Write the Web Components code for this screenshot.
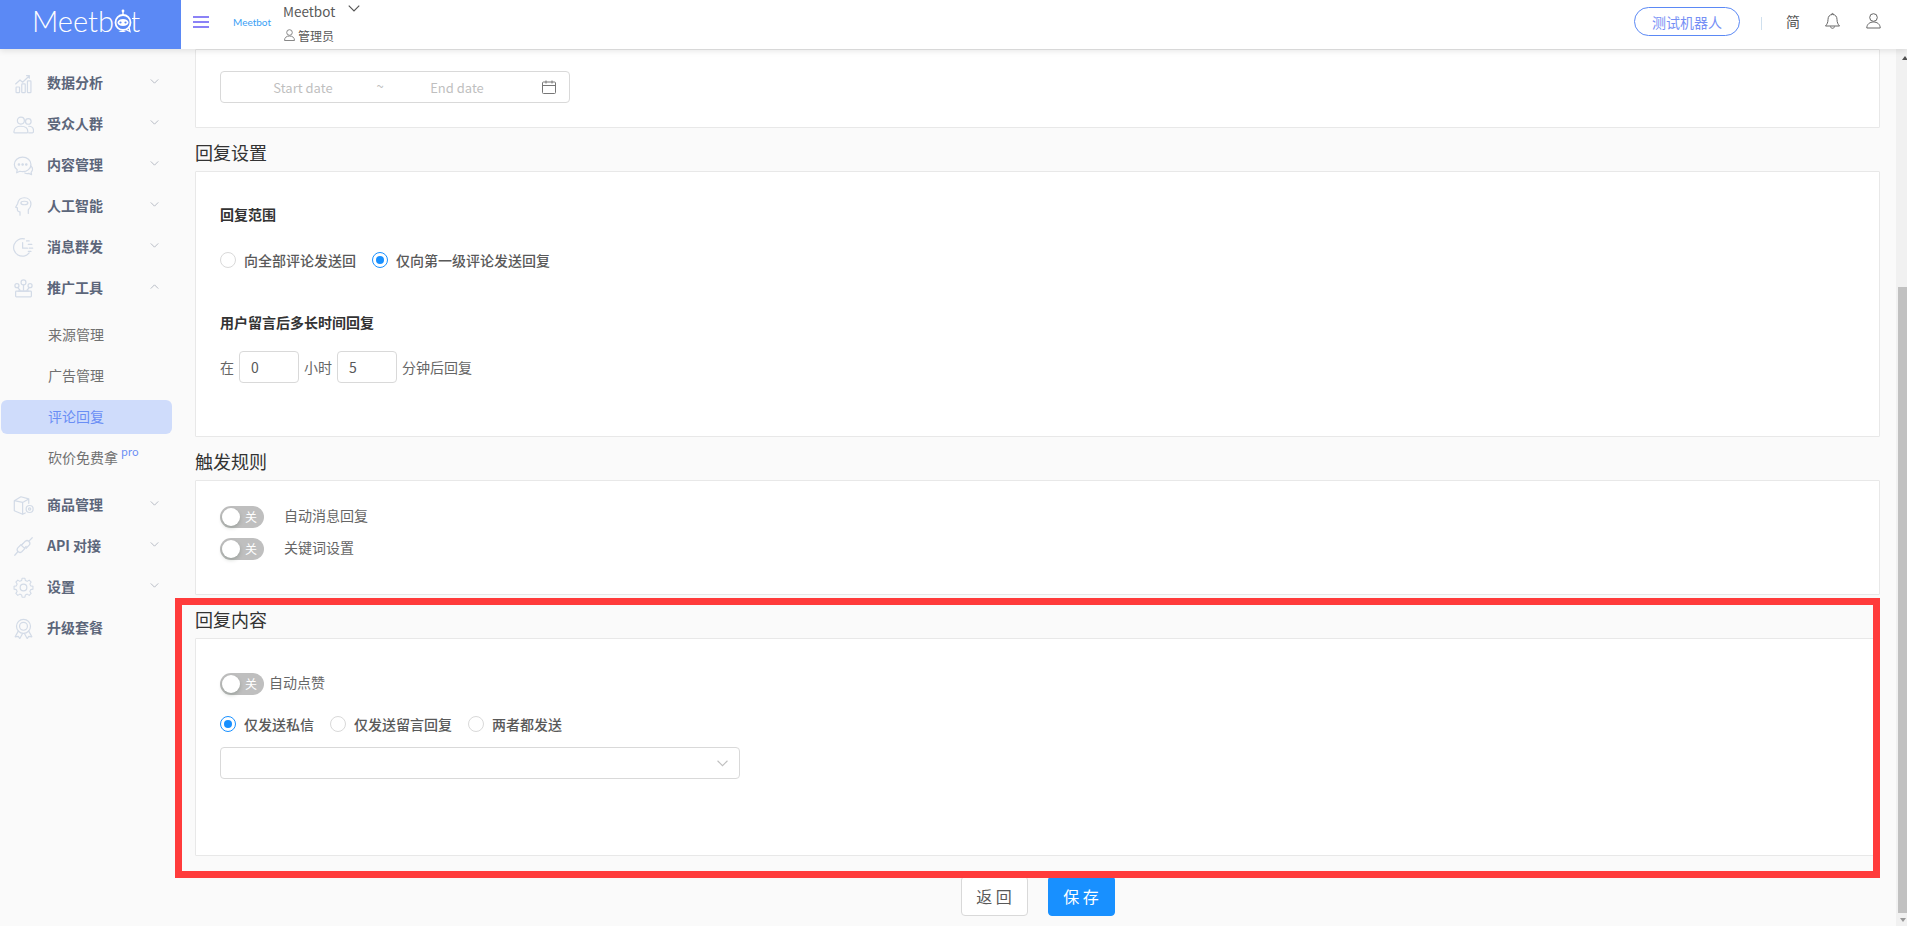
<!DOCTYPE html>
<html lang="zh"><head><meta charset="utf-8"><title>Meetbot</title>
<style>
html,body{margin:0;padding:0;height:926px;overflow:hidden;background:#fafafa;font-family:"Noto Sans CJK SC","Noto Sans",sans-serif;font-size:14px;color:#666}
</style></head><body>
<app-shell>
  <app-header slot="header"></app-header>
  <side-nav slot="nav">
    <nav-item icon="chart" arrow="down">数据分析</nav-item>
    <nav-item icon="users" arrow="down">受众人群</nav-item>
    <nav-item icon="chat" arrow="down">内容管理</nav-item>
    <nav-item icon="head" arrow="down">人工智能</nav-item>
    <nav-item icon="clock" arrow="down">消息群发</nav-item>
    <nav-item icon="tool" arrow="up">推广工具</nav-item>
    <sub-nav>
      <sub-item>来源管理</sub-item>
      <sub-item>广告管理</sub-item>
      <sub-item active>评论回复</sub-item>
      <sub-item pro>砍价免费拿</sub-item>
    </sub-nav>
    <nav-item icon="box" arrow="down">商品管理</nav-item>
    <nav-item icon="plug" arrow="down">API 对接</nav-item>
    <nav-item icon="gear" arrow="down">设置</nav-item>
    <nav-item icon="medal">升级套餐</nav-item>
  </side-nav>
  <form-card style="height:79px;padding-top:21px">
    <date-range></date-range>
  </form-card>

  <section-title>回复设置</section-title>
  <form-card style="height:266px">
    <field-label style="margin-top:32px">回复范围</field-label>
    <radio-row style="margin-top:26px">
      <radio-opt>向全部评论发送回</radio-opt>
      <radio-opt checked>仅向第一级评论发送回复</radio-opt>
    </radio-row>
    <field-label style="margin-top:42px">用户留言后多长时间回复</field-label>
    <delay-row style="margin-top:19px"></delay-row>
  </form-card>

  <section-title>触发规则</section-title>
  <form-card style="height:115px;padding-top:25px">
    <toggle-row gap="20">自动消息回复</toggle-row>
    <toggle-row gap="20" style="margin-top:10px">关键词设置</toggle-row>
  </form-card>

  <section-title>回复内容</section-title>
  <form-card style="height:218px;padding-top:34px">
    <toggle-row gap="5">自动点赞</toggle-row>
    <radio-row strong style="margin-top:19px">
      <radio-opt checked>仅发送私信</radio-opt>
      <radio-opt>仅发送留言回复</radio-opt>
      <radio-opt>两者都发送</radio-opt>
    </radio-row>
    <select-box style="margin-top:13px"></select-box>
  </form-card>

  <action-bar>
    <action-btn>返 回</action-btn>
    <action-btn primary>保 存</action-btn>
  </action-bar>
</app-shell>
<script>
const ICONS={
chart:'<path d="M3 12.500 8 8l3 2.500 7.500-7M15.500 3h3.200v3"/><rect x="3.500" y="16" width="4" height="6.500" rx=".8"/><rect x="10" y="12.500" width="4" height="10" rx=".8"/><rect x="16.500" y="9" width="4" height="13.500" rx=".8"/>',
users:'<circle cx="9" cy="7.500" r="4"/><path d="M1 20.500c0-4.500 3.400-6.500 8-6.500s8 2 8 6.500c0 .6-.4 1-1 1H2c-.6 0-1-.4-1-1z"/><circle cx="17.500" cy="8.500" r="3.200"/><path d="M18 14c3.400 0 5.500 2 5.500 5.500 0 1.300-.5 2-1.300 2H18"/>',
chat:'<path d="M11 2.500c5.200 0 9.500 3.600 9.500 8.300s-4.300 8.300-9.500 8.300c-1.100 0-2.200-.2-3.200-.5l-3.600 1.700.6-3.400C2.900 15.400 1.500 13.300 1.500 10.800 1.500 6.100 5.800 2.500 11 2.500z"/><path d="M20.500 12.500c1.500 1.300 2 2.800 1.800 4.300-.2 1.200-.8 2.200-1.600 3l.5 2.700-3.200-1.500c-1.500.4-3.200.2-4.500-.5"/><circle cx="6.800" cy="10.800" r=".8" fill="currentColor"/><circle cx="11" cy="10.800" r=".8" fill="currentColor"/><circle cx="15.200" cy="10.800" r=".8" fill="currentColor"/>',
head:'<path d="M8 22v-3.800c-1.200-.3-3-.4-3-2.200v-2.500l-2-.7 2.300-4C6 4.700 9 2 13 2c4.500 0 7.500 3.200 7.500 7.500 0 2.700-1.300 4.700-3 6.200V20"/><ellipse cx="13" cy="8" rx="4" ry="2"/>',
clock:'<path d="M18.500 18.200A10 10 0 1 1 13 2.200"/><path d="M11 6.500v6.300h5.500M15.500 4.500h3M17.500 8.500h4M18.500 12.800h4M17.500 16.500h3"/>',
tool:'<circle cx="12" cy="5" r="2.800"/><circle cx="4.500" cy="8.800" r="2.300"/><circle cx="19.500" cy="8.800" r="2.300"/><path d="M12 8v6M5.500 11l2.500 3M18.500 11 16 14"/><rect x="3" y="15" width="18" height="6.500" rx="1"/><path d="M6 15h12"/>',
box:'<path d="M1.500 6.500 9 2l9 2.500-7 4-9.500-2zM1.500 6.500V18l9.500 4V8.500M18 4.500v5M11 22l3-1.500"/><circle cx="19" cy="16" r="4"/><circle cx="19" cy="16" r="1.300"/>',
plug:'<path d="M9 10 5.500 13.500a3.200 3.200 0 0 0 4.500 4.500l3.500-3.500zM5.500 18 2 22M9.500 10.500l2-2M13 14l2-2"/><path d="M15 14l3.500-3.500A3.200 3.200 0 0 0 14 6l-3.500 3.500M18.500 5.500 22 2"/>',
gear:'<path d="M10.200 1.500h3.600l.6 2.900 2.300 1 2.500-1.600 2.500 2.500-1.600 2.500 1 2.300 2.900.6v3.600l-2.900.6-1 2.300 1.600 2.500-2.500 2.500-2.500-1.600-2.300 1-.6 2.900h-3.600l-.6-2.900-2.300-1-2.500 1.600-2.500-2.500 1.600-2.500-1-2.300-2.900-.6v-3.600l2.900-.6 1-2.300-1.600-2.500 2.500-2.500 2.500 1.600 2.300-1z" transform="translate(1.200 1.200) scale(.9) translate(0 -1.200)"/><circle cx="12" cy="12" r="3.800"/>',
medal:'<circle cx="12" cy="9.500" r="8"/><circle cx="12" cy="9.500" r="4.500"/><path d="m6 15-3.500 6.500 3.500-.4 1.800 2.400 3-5.500M18 15l3.500 6.500-3.500-.4-1.800 2.400-3-5.500"/>'
};
const svgIcon=(n,s=21)=>`<svg width="${s}" height="${s}" viewBox="0 0 24 24" fill="none" stroke="currentColor" stroke-width="1.400" stroke-linejoin="round" stroke-linecap="round">${ICONS[n]}</svg>`;
const chevron=(dir,w=9,c='currentColor')=>`<svg width="${w}" height="${Math.round(w*.6)}" viewBox="0 0 10 6" fill="none" stroke="${c}" stroke-width="1"><path d="${dir==='up'?'M.5 5.500 5 1l4.500 4.500':'M.5.500 5 5 9.500.500'}"/></svg>`;
function def(name,html,init){
  customElements.define(name,class extends HTMLElement{
    constructor(){super();this.attachShadow({mode:'open'});}
    connectedCallback(){this.shadowRoot.innerHTML=typeof html==='function'?html(this):html;if(init)init(this);}
  });
}
def('app-shell',`<style>
:host{display:grid;grid-template:49px 877px/181px 1715px 11px;width:1907px;height:926px;position:relative;overflow:hidden;background:#fafafa}
.h{grid-column:1/4;position:relative;z-index:2}
.m{padding:0 16px 0 14px;min-width:0}
.sb{background:#f1f1f1;position:relative;display:flex;flex-direction:column;align-items:flex-end}
.sb i{display:block}
.up{margin:7px 0 0;width:0;height:0;border:3px solid transparent;border-bottom:4px solid #505050;border-top:0;margin-right:-1px}
.th{width:9px;height:626px;background:#c1c1c1;margin-top:227px}
.dn{margin:5px 0 0;width:0;height:0;border:3px solid transparent;border-top:4px solid #999;border-bottom:0;margin-right:1px}
.mark{position:absolute;left:175px;top:598px;width:1705px;height:280px;box-sizing:border-box;border:7px solid #ff3b3b;pointer-events:none;z-index:1}
</style>
<div class="h"><slot name="header"></slot></div>
<div><slot name="nav"></slot></div>
<div class="m"><slot></slot></div>
<div class="sb"><i class="up"></i><i class="th"></i><i class="dn"></i></div>
<div class="mark"></div>`);
def('app-header',`<style>
:host{display:flex;height:49px;background:#fff;box-shadow:0 2px 6px rgba(0,0,0,.1);align-items:stretch}
.logo{width:181px;background:#5b89f5;color:#fff;font:300 29px/1 Lato,sans-serif;display:flex;align-items:center;padding-left:32px;box-sizing:border-box;height:49px;padding-bottom:8px}
.o{position:relative;display:inline-block}
.o svg{position:absolute;left:-1px;top:-1px;width:20px;height:30px}
.burger{margin-left:12px;width:16px;height:12px;margin-top:16px;display:flex;flex-direction:column;justify-content:space-between}
.burger i{height:2px;background:#8b82f6;display:block}
.mini{margin-left:24px;margin-top:15px;font:400 10px/14px Lato,sans-serif;color:#3aa0f5;width:50px}
.who{display:flex;flex-direction:column;color:#595959}
.name{display:flex;align-items:center;height:22px;font-size:13.500px}
.name svg{margin-left:13px;margin-top:-5px}
.role{display:flex;align-items:center;font-size:12px;margin-top:5px;height:16px;gap:3px;margin-left:1px}
.sp{flex:1}
.btn{margin-top:7px;height:29px;width:106px;box-sizing:border-box;border:1px solid #5b89f5;border-radius:15px;display:flex;align-items:center;justify-content:center;color:#7690f5;font-size:14px}
.div{width:1px;height:13px;background:#cfe0ee;margin:17px 0 0 21px}
.lang{margin:11px 0 0 24px;font-size:14px;line-height:20px;color:#555}
.ic{margin:12px 0 0 25px;color:#666;display:block;height:18px}
.ic.u{margin-left:26px;margin-right:26px}
</style>
<div class="logo">Meetb<span class="o">o<svg viewBox="0 0 20 30" fill="none" stroke="#fff"><rect x="1" y="9" width="18" height="17" fill="#5b89f5" stroke="none"/><circle cx="10" cy="17.500" r="7.500" stroke-width="1.800"/><ellipse cx="10" cy="17.500" rx="5.500" ry="3.600" fill="#fff" stroke="none"/><circle cx="7.500" cy="17.500" r="1.100" fill="#5b89f5" stroke="none"/><circle cx="12.500" cy="17.500" r="1.100" fill="#5b89f5" stroke="none"/><path d="M10 10V7" stroke-width="1.400"/><circle cx="10" cy="6" r="1.400" fill="#fff" stroke="none"/><path d="M13 24.500l4 2-1-4" stroke-width="1.300"/></svg></span>t</div>
<div class="burger"><i></i><i></i><i></i></div>
<div class="mini">Meetbot</div>
<div class="who">
  <div class="name">Meetbot${chevron('down',12,'#555')}</div>
  <div class="role"><svg width="11" height="12" viewBox="0 0 11 12" fill="none" stroke="#888"><circle cx="5.500" cy="3.500" r="2.800"/><path d="M.5 11.500c0-3 2-4.500 5-4.500s5 1.500 5 4.500z"/></svg>管理员</div>
</div>
<div class="sp"></div>
<div class="btn">测试机器人</div>
<div class="div"></div>
<div class="lang">简</div>
<svg class="ic" width="15" height="18" viewBox="0 0 15 18" fill="none" stroke="#666" stroke-width="1"><path d="M7.500 2.500c-3 0-4.500 2.300-4.500 5 0 3-1 4.800-2.500 6.500h14c-1.500-1.700-2.500-3.500-2.500-6.500 0-2.700-1.500-5-4.500-5zM6.500 2.500c0-1.400 2-1.400 2 0M5.500 14.500c.3 2.400 3.700 2.400 4 0"/></svg>
<svg class="ic u" width="15" height="16" viewBox="0 0 15 16" fill="none" stroke="#666" stroke-width="1"><circle cx="7.500" cy="4.500" r="3.800"/><path d="M.8 15c0-3.800 3-6 6.700-6s6.700 2.200 6.700 6z"/></svg>`);
def('side-nav',`<style>:host{display:flex;flex-direction:column;padding-top:14px;background:#fafafa;height:100%;box-sizing:border-box}</style><slot></slot>`);
def('nav-item',h=>`<style>
:host{display:flex;align-items:center;height:41px;padding-left:13px;color:#5c667a;font-weight:600;font-size:14px;white-space:nowrap;box-sizing:border-box;position:relative}
.i{width:21px;height:21px;color:#d3dbe7;margin-right:13px;display:block}
.t{flex:1;padding-bottom:3px}
.c{margin-right:22px;color:#aab0bb;display:flex;margin-top:-4px}
</style><span class="i">${svgIcon(h.getAttribute('icon'))}</span><span class="t"><slot></slot></span>${h.hasAttribute('arrow')?`<span class="c">${chevron(h.getAttribute('arrow'))}</span>`:''}`);
def('sub-nav',`<style>:host{display:flex;flex-direction:column;padding:6px 0}</style><slot></slot>`);
def('sub-item',h=>`<style>
:host{display:block;height:41px;padding:3px 9px 4px 1px;box-sizing:border-box}
.b{height:34px;box-sizing:border-box;padding-bottom:2px;border-radius:6px;display:flex;align-items:center;padding-left:47px;color:#707070;font-size:14px;white-space:nowrap}
:host([active]) .b{background:#cfdcfb;color:#6a8ef5}
sup{font-size:11px;color:#6a8ef5;line-height:1;margin:-11px 0 0 3px;align-self:center}
</style><div class="b"><slot></slot>${h.hasAttribute('pro')?'<sup>pro</sup>':''}</div>`);
def('section-title',`<style>:host{display:block;height:43px;box-sizing:border-box;padding-top:12px;font-size:18px;line-height:24px;color:#333}</style><slot></slot>`);
def('form-card',`<style>:host{display:block;background:#fff;border:1px solid #e8e8e8;box-sizing:border-box;padding-left:24px;border-radius:1px}</style><slot></slot>`);
def('field-label',`<style>:host{display:block;font-weight:600;font-size:14px;line-height:20px;color:#333}</style><slot></slot>`);
def('radio-row',`<style>:host{display:flex;align-items:center;gap:16px;height:20px;color:#595959}:host([strong]){font-weight:500}</style><slot></slot>`);
def('radio-opt',`<style>
:host{display:flex;align-items:center;gap:8px;font-size:14px;line-height:20px;font-weight:500;white-space:nowrap}
.r{width:16px;height:16px;box-sizing:border-box;border:1px solid #d9d9d9;border-radius:50%;display:flex;align-items:center;justify-content:center;background:#fff}
:host([checked]) .r{border-color:#1890ff}
:host([checked]) .r::after{content:"";width:8px;height:8px;border-radius:50%;background:#1890ff}
</style><span class="r"></span><span><slot></slot></span>`);
def('delay-row',`<style>
:host{display:flex;align-items:center;height:32px;color:#666;font-size:14px}
.n{width:60px;height:32px;box-sizing:border-box;border:1px solid #d9d9d9;border-radius:4px;padding-left:11px;display:flex;align-items:center;color:#595959;background:#fff}
.a{margin:0 5px}
</style><span>在</span><span class="n" style="margin-left:5px">0</span><span class="a">小时</span><span class="n">5</span><span class="a">分钟后回复</span>`);
def('toggle-row',h=>`<style>
:host{display:flex;align-items:center;height:22px;font-size:14px;color:#666}
.t{width:44px;height:22px;border-radius:11px;background:#bfbfbf;position:relative;flex:none;color:#fff;font-size:12px;line-height:22px;text-align:right;padding-right:7px;box-sizing:border-box}
.k{position:absolute;left:2px;top:2px;width:18px;height:18px;border-radius:50%;background:#fff;box-shadow:0 2px 4px rgba(0,35,11,.2)}
.l{margin-left:${h.getAttribute('gap')||8}px;margin-top:-5px}
</style><span class="t"><span class="k"></span>关</span><span class="l"><slot></slot></span>`);
def('select-box',`<style>
:host{display:flex;width:520px;height:32px;box-sizing:border-box;border:1px solid #d9d9d9;border-radius:4px;align-items:center;justify-content:flex-end;padding-right:11px;background:#fff;color:#bfbfbf}
</style>${chevron('down',11)}`);
def('date-range',`<style>
:host{display:flex;width:350px;height:32px;box-sizing:border-box;border:1px solid #d9d9d9;border-radius:4px;align-items:center;padding-left:13px;color:#bfbfbf;font-size:13px;background:#fff}
span{text-align:center}.a{width:138px}.s{width:16px;margin-top:-3px}
svg{margin-left:16px}
</style><span class="a">Start date</span><span class="s">~</span><span class="a">End date</span>
<svg width="14" height="14" viewBox="0 0 14 14" fill="none" stroke="#777" stroke-width="1"><rect x=".5" y="2" width="13" height="11.500" rx="1"/><path d="M.5 5.500h13M4 .5v3M10 .5v3"/></svg>`);
def('action-bar',`<style>:host{display:flex;justify-content:center;gap:20px;margin-top:20px}</style><slot></slot>`);
def('action-btn',`<style>
:host{display:flex;align-items:center;justify-content:center;width:67px;height:40px;box-sizing:border-box;border:1px solid #d9d9d9;border-radius:4px;background:#fff;color:#595959;font-size:16px;white-space:nowrap}
:host([primary]){background:#1890ff;border-color:#1890ff;color:#fff}
</style><slot></slot>`);
</script>
</body></html>
